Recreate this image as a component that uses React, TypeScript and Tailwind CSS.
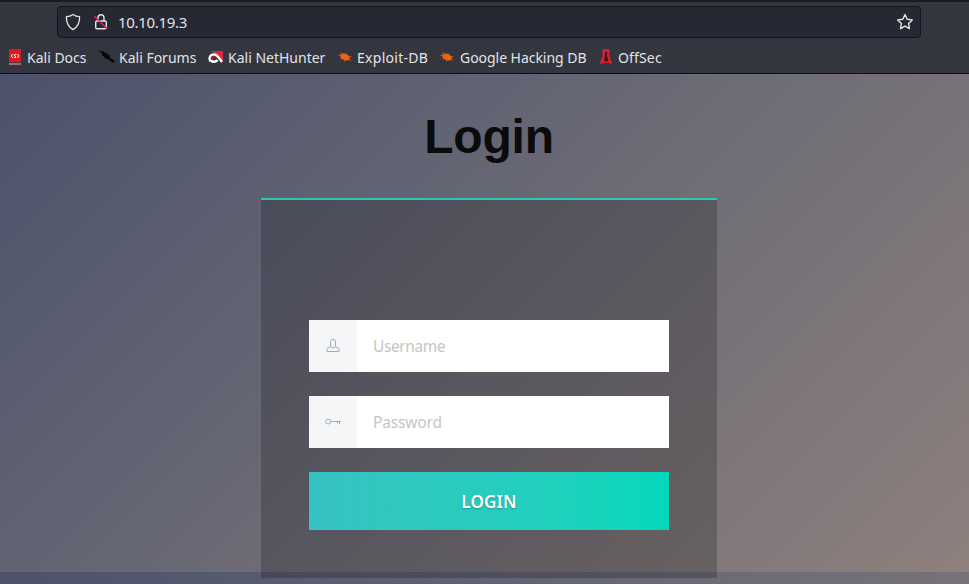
import type { ReactNode } from "react";

const uiFont = "font-['Noto_Sans',sans-serif]";

function DocsIcon() {
  return (
    <svg width="12" height="16" viewBox="0 0 12 16">
      <path d="M0 0h12v13.300H0z" fill="#dd1a20" />
      <path d="M0 15h12" stroke="#d99" strokeWidth="1.200" />
      <path d="M3.600 5 2.300 7l1.300 1.800M8.400 5l1.300 1.800-1.300 2M7.300 5.400 5 6l2 2-2.300.7" fill="none" stroke="#fff" strokeWidth="1" />
    </svg>
  );
}

function ForumsIcon() {
  return (
    <svg width="18" height="16" viewBox="0 0 18 16">
      <path d="M0 .8 3.500 2.500 5 2l1.500 1.500L8 4l3 2.300 1.500 3.200 2.500.8 1.500 2.200L16.300 14l-3-1-2.500-2.500-2.500-.5-1.500-2.500L4.500 7 4 4.500z" fill="#07090b" />
      <path d="m5 5 3 4M9 6l4 5" stroke="#07090b" strokeWidth="1.800" />
    </svg>
  );
}

function NetHunterIcon() {
  return (
    <svg width="16" height="14" viewBox="0 0 16 14">
      <path d="M3 1h12v11L9 5z" fill="#e5233b" />
      <path d="M2.500 11.500C0 7 3 4 6.500 4.500c3 .5 4.500 3.500 7.500 7.500" fill="none" stroke="#fff" strokeWidth="2.400" />
      <path d="M3 10.500c2 2 5 1.500 6.500-.5" fill="none" stroke="#fff" strokeWidth="2.600" />
      <path d="M4.200 9c0-2 2-3 4-2" fill="none" stroke="#d72a40" strokeWidth="1" />
    </svg>
  );
}

function BugIcon() {
  return (
    <svg width="14" height="14" viewBox="0 0 14 14">
      <ellipse cx="7" cy="7" rx="5" ry="3.200" transform="rotate(22 7 7)" fill="#ed6318" />
      <path d="M3 2.500v3M8 3v2M.5 5.500h3M11 7l2.500-.5M2.500 9l2-1M6.500 11.500l1-2M11 9l2 2" stroke="#c9571f" strokeWidth="1" />
    </svg>
  );
}

function OffSecIcon() {
  return (
    <svg width="14" height="16" viewBox="0 0 14 16">
      <path d="M3.500 0h7v7l3 8.500L10 14H4L.5 15.500 3.500 7z" fill="#d71f32" />
      <path d="M6 3h2v4l1.500 4.500-2.500 1.500-2-1.500L6 7z" fill="#41151e" />
    </svg>
  );
}

type BookmarkProps = { icon: ReactNode; slot: string; label: string; text: string };

function Bookmark({ icon, slot, label, text }: BookmarkProps) {
  return (
    <a className="flex shrink-0 items-center">
      <span className={`flex shrink-0 items-center ${slot}`}>{icon}</span>
      <span className={`shrink-0 whitespace-nowrap ${text}`}>{label}</span>
    </a>
  );
}

function Browser() {
  return (
    <header className={`h-[74px] border-t-2 border-b border-t-[#191b23] border-b-[#0d0e12] bg-[#33363e] text-[#e2e3e7] ${uiFont}`}>
      <div className="mt-1 ml-[57px] flex h-8 w-[864px] items-center rounded-[4px] border border-[#14151c] bg-[#262833] pr-[6px] pl-[7px]">
        <svg width="16" height="18" viewBox="0 0 16 18" fill="none" stroke="#e2e3e7" strokeWidth="1.300" strokeLinejoin="round">
          <path d="M8 1.400c2 1.500 4.200 2.200 6.600 2.300.2 5.800-1.700 10-6.600 12.900C3.100 13.700 1.200 9.500 1.400 3.700 3.800 3.600 6 2.900 8 1.400z" />
        </svg>
        <svg className="ml-3" width="16" height="18" viewBox="0 0 16 18" fill="none" stroke="#e2e3e7" strokeWidth="1.400">
          <rect x="2.700" y="8" width="10.600" height="7.800" rx="1.300" />
          <path d="M5 8V4.800a3 3 0 0 1 6 0V8" />
          <path d="m1.300 3 13 13" stroke="#e52652" strokeWidth="1.500" />
        </svg>
        <span className="ml-[9px] w-[70px] text-[15px] leading-5 tracking-[-0.3px] whitespace-nowrap">10.10.19.3</span>
        <svg className="ml-auto" width="18" height="18" viewBox="0 0 18 18" fill="none" stroke="#e2e3e7" strokeWidth="1.400" strokeLinejoin="round">
          <path d="m9 1.500 2.200 4.700 5.100.7-3.700 3.600.9 5.100L9 13.100l-4.500 2.500.9-5.100L1.700 6.900l5.100-.7z" />
        </svg>
      </div>
      <nav className="flex h-[38px] items-center pl-[9px] text-[14px]">
        <Bookmark icon={<DocsIcon />} slot="w-[18px]" label="Kali Docs" text="w-[71px]" />
        <Bookmark icon={<ForumsIcon />} slot="w-[21px]" label="Kali Forums" text="w-[89px]" />
        <Bookmark icon={<NetHunterIcon />} slot="w-[20px]" label="Kali NetHunter" text="w-[110px]" />
        <Bookmark icon={<BugIcon />} slot="w-[19px]" label="Exploit-DB" text="w-[83px] tracking-[0.28px]" />
        <Bookmark icon={<BugIcon />} slot="w-[20px]" label="Google Hacking DB" text="w-[139px] tracking-[-0.04px]" />
        <Bookmark icon={<OffSecIcon />} slot="w-[19px]" label="OffSec" text="w-[46px] tracking-[0.15px]" />
      </nav>
    </header>
  );
}

function Field({ icon, placeholder, type, spacing }: { icon: ReactNode; placeholder: string; type: string; spacing: string }) {
  return (
    <label className="mb-6 flex h-[52px] bg-white">
      <span className="flex w-12 items-center justify-center bg-[#f4f6f8]">{icon}</span>
      <input className={`w-[312px] bg-transparent px-4 pt-[2px] text-[15.5px] text-gray-700 outline-none placeholder:text-[#c5c5c7] ${spacing} ${uiFont}`} type={type} placeholder={placeholder} />
    </label>
  );
}

export default function App() {
  return (
    <div className="h-[584px] w-[969px] overflow-hidden">
      <Browser />
      <main className="flex h-[510px] flex-col items-center bg-[linear-gradient(135deg,#4c526b_0%,#6c6b76_50%,#8e807d_100%)] bg-[length:100%_498px] bg-repeat pl-[9px]">
        <h1 className="flex h-[124px] items-center pt-[2px] font-['Liberation_Sans',Arial,sans-serif] text-[48px] leading-none font-bold tracking-[-0.2px] text-[#0b0b0c]">Login</h1>
        <form className="h-[380px] w-[456px] border-t-2 border-[#2fc6b3] bg-black/20 px-12 pt-[120px]">
          <Field
            type="text"
            placeholder="Username"
            spacing="tracking-[-0.4px]"
            icon={
              <svg width="14" height="14" viewBox="0 0 14 14" fill="none" stroke="#a5a9b4" strokeWidth="1">
                <path d="M4.500 3C4.500 1.300 5.300.5 7 .5S9.500 1.300 9.500 3v3c0 1.500-1 3-2.500 3S4.500 7.500 4.500 6zM4.500 8C2 8.300 1 9 1 10.500v2h12v-2C13 9 12 8.300 9.500 8" />
              </svg>
            }
          />
          <Field
            type="password"
            placeholder="Password"
            spacing="tracking-[-0.15px]"
            icon={
              <svg width="16" height="8" viewBox="0 0 16 8" fill="none" stroke="#a5a9b4" strokeWidth="1">
                <circle cx="3.200" cy="3.500" r="2.500" />
                <path d="M5.700 3.500h9.800M14.500 3.500v2.500M12.500 3.500v1.500" />
              </svg>
            }
          />
          <button type="button" className={`flex h-[58px] w-full items-center justify-center bg-linear-to-r from-[#37c2c2] to-[#02d8bb] pt-[2px] text-[17px] font-semibold tracking-[0.2px] text-white [text-shadow:0_1px_2px_rgba(0,0,0,0.25)] ${uiFont}`}>
            LOGIN
          </button>
        </form>
      </main>
    </div>
  );
}
